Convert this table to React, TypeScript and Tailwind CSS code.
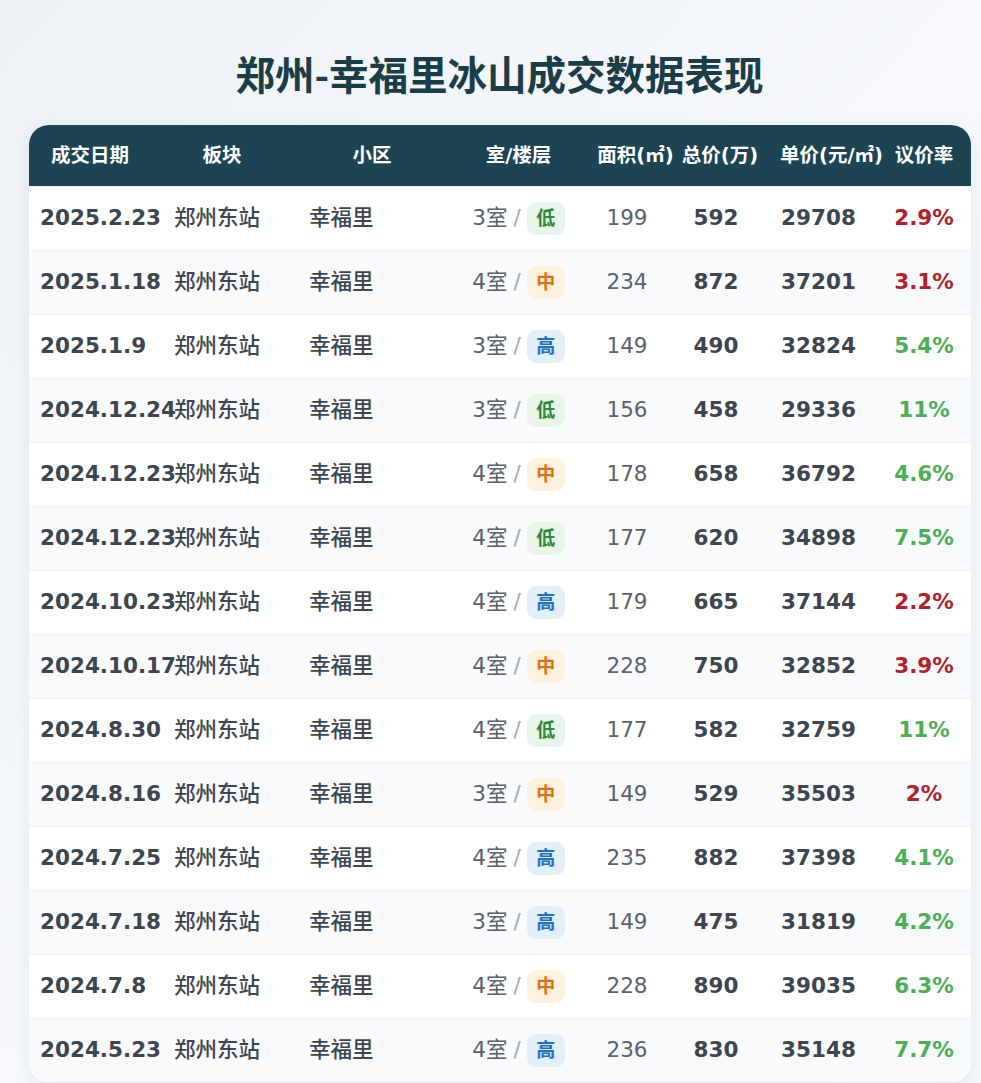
import React from 'react';

type Floor = '低' | '中' | '高';

interface Deal {
  date: string;
  plate: string;
  community: string;
  rooms: number;
  floor: Floor;
  area: number;
  total: number;
  unit: number;
  rate: string;
  up: boolean; // red when true
}

const deals: Deal[] = [
  { date: '2025.2.23', plate: '郑州东站', community: '幸福里', rooms: 3, floor: '低', area: 199, total: 592, unit: 29708, rate: '2.9%', up: true },
  { date: '2025.1.18', plate: '郑州东站', community: '幸福里', rooms: 4, floor: '中', area: 234, total: 872, unit: 37201, rate: '3.1%', up: true },
  { date: '2025.1.9', plate: '郑州东站', community: '幸福里', rooms: 3, floor: '高', area: 149, total: 490, unit: 32824, rate: '5.4%', up: false },
  { date: '2024.12.24', plate: '郑州东站', community: '幸福里', rooms: 3, floor: '低', area: 156, total: 458, unit: 29336, rate: '11%', up: false },
  { date: '2024.12.23', plate: '郑州东站', community: '幸福里', rooms: 4, floor: '中', area: 178, total: 658, unit: 36792, rate: '4.6%', up: false },
  { date: '2024.12.23', plate: '郑州东站', community: '幸福里', rooms: 4, floor: '低', area: 177, total: 620, unit: 34898, rate: '7.5%', up: false },
  { date: '2024.10.23', plate: '郑州东站', community: '幸福里', rooms: 4, floor: '高', area: 179, total: 665, unit: 37144, rate: '2.2%', up: true },
  { date: '2024.10.17', plate: '郑州东站', community: '幸福里', rooms: 4, floor: '中', area: 228, total: 750, unit: 32852, rate: '3.9%', up: true },
  { date: '2024.8.30', plate: '郑州东站', community: '幸福里', rooms: 4, floor: '低', area: 177, total: 582, unit: 32759, rate: '11%', up: false },
  { date: '2024.8.16', plate: '郑州东站', community: '幸福里', rooms: 3, floor: '中', area: 149, total: 529, unit: 35503, rate: '2%', up: true },
  { date: '2024.7.25', plate: '郑州东站', community: '幸福里', rooms: 4, floor: '高', area: 235, total: 882, unit: 37398, rate: '4.1%', up: false },
  { date: '2024.7.18', plate: '郑州东站', community: '幸福里', rooms: 3, floor: '高', area: 149, total: 475, unit: 31819, rate: '4.2%', up: false },
  { date: '2024.7.8', plate: '郑州东站', community: '幸福里', rooms: 4, floor: '中', area: 228, total: 890, unit: 39035, rate: '6.3%', up: false },
  { date: '2024.5.23', plate: '郑州东站', community: '幸福里', rooms: 4, floor: '高', area: 236, total: 830, unit: 35148, rate: '7.7%', up: false },
];

const badgeStyle: Record<Floor, string> = {
  低: 'bg-[#e8f4ea] text-[#2f8a3c]',
  中: 'bg-[#fff1e0] text-[#e0700f]',
  高: 'bg-[#e2effb] text-[#1f6ec4]',
};

// column template shared by header and rows
const cols = 'grid grid-cols-[122px_142px_158px_135px_94px_80px_117px_94px]';

function FloorBadge({ floor }: { floor: Floor }) {
  return (
    <span className={`inline-flex h-[33px] w-[38px] items-center justify-center rounded-[9px] text-[19px] font-bold ${badgeStyle[floor]}`}>
      {floor}
    </span>
  );
}

export default function App() {
  return (
    <div
      className="min-h-screen w-full bg-gradient-to-br from-[#edf1f5] via-[#f6f8fb] to-[#f4f7fa] pt-[50px]"
      style={{ fontFamily: '"DejaVu Sans", "Noto Sans CJK SC", sans-serif' }}
    >
      <h1
        className="pl-[18px] text-center text-[39.5px] font-bold leading-[46px] text-[#1b3d47]"
        style={{ fontFamily: '"Noto Sans CJK SC", sans-serif' }}
      >
        郑州-幸福里冰山成交数据表现
      </h1>

      <div className="ml-[29px] mt-[29px] w-[942px] overflow-hidden rounded-[20px] bg-white shadow-[0_4px_18px_rgba(30,60,80,0.08)]">
        {/* Header */}
        <div className={`${cols} h-[61px] items-center bg-[#1d4452] text-[19.5px] font-bold text-white`}>
          <div className="text-center">成交日期</div>
          <div className="text-center">板块</div>
          <div className="text-center">小区</div>
          <div className="text-center">室/楼层</div>
          <div className="whitespace-nowrap pl-[5px] text-center">面积(㎡)</div>
          <div className="whitespace-nowrap text-center">总价(万)</div>
          <div className="whitespace-nowrap pl-[20px] text-center">单价(元/㎡)</div>
          <div className="text-center">议价率</div>
        </div>

        {/* Rows */}
        {deals.map((d, i) => (
          <div
            key={i}
            className={`${cols} h-[64px] items-center border-t border-[#eef1f4] text-[21.5px] ${i % 2 === 1 ? 'bg-[#f8fafc]' : 'bg-white'}`}
          >
            <div className="whitespace-nowrap pl-[11px] font-bold text-[#3e454e]">{d.date}</div>
            <div className="whitespace-nowrap pl-[23px] font-medium text-[#3e454e]">{d.plate}</div>
            <div className="whitespace-nowrap pl-[16px] font-medium text-[#3e454e]">{d.community}</div>
            <div className="flex items-center justify-center gap-[6px] whitespace-nowrap">
              <span className="text-[#5a616a]">{d.rooms}室</span>
              <span className="text-[#a3a9b0]">/</span>
              <FloorBadge floor={d.floor} />
            </div>
            <div className="pr-[12px] text-center text-[#5a616a]">{d.area}</div>
            <div className="pr-[8px] text-center font-bold text-[#3e454e]">{d.total}</div>
            <div className="text-center font-bold text-[#3e454e]">{d.unit}</div>
            <div className={`text-center font-bold ${d.up ? 'text-[#b3202b]' : 'text-[#4caf55]'}`}>{d.rate}</div>
          </div>
        ))}
      </div>
    </div>
  );
}
